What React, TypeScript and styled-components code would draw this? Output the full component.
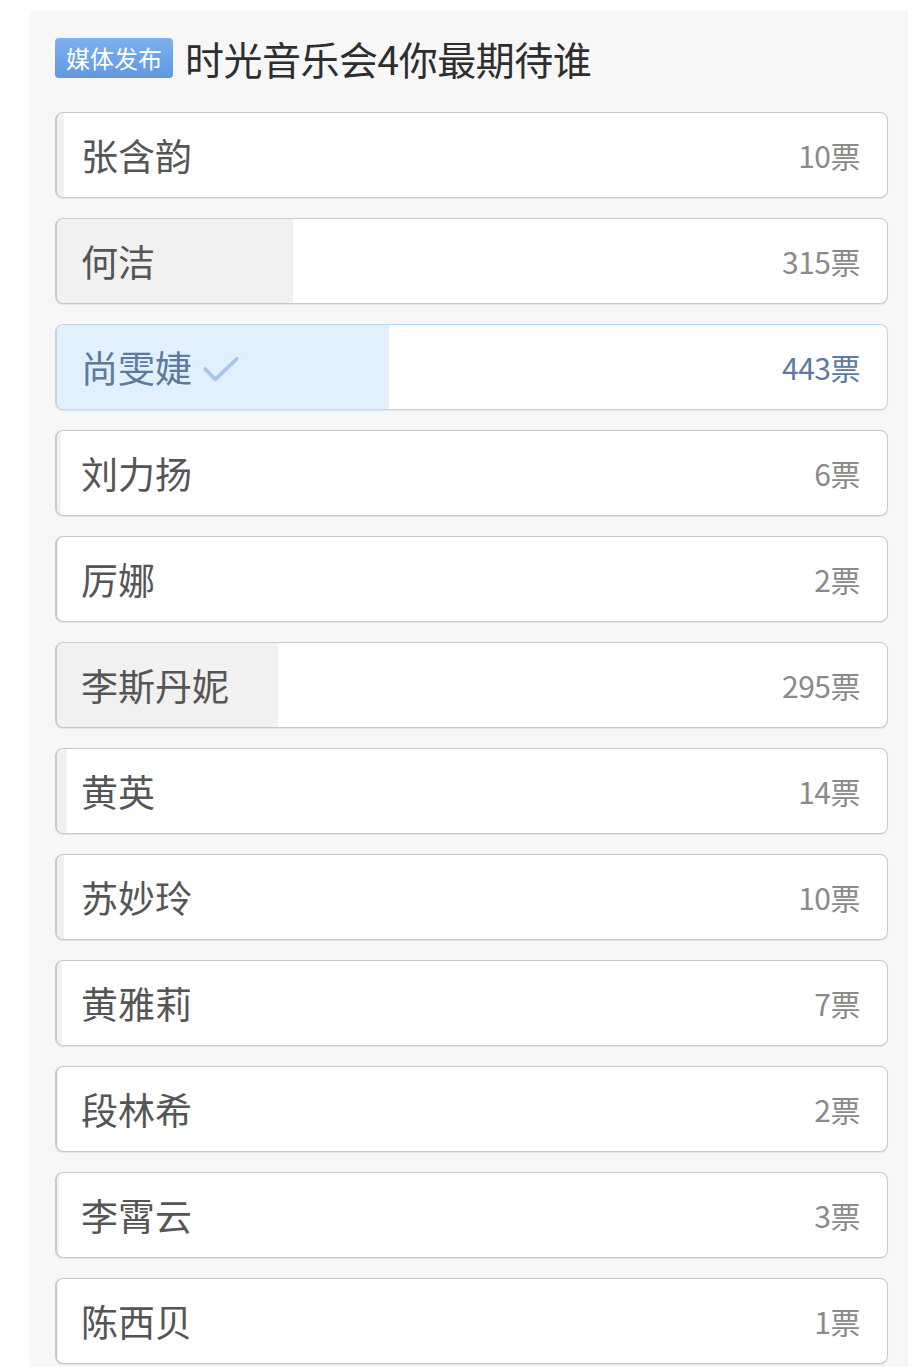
import styled, { createGlobalStyle } from "styled-components";

type Option = { name: string; votes: number; chosen?: boolean };

const options: Option[] = [
  { name: "张含韵", votes: 10 },
  { name: "何洁", votes: 315 },
  { name: "尚雯婕", votes: 443, chosen: true },
  { name: "刘力扬", votes: 6 },
  { name: "厉娜", votes: 2 },
  { name: "李斯丹妮", votes: 295 },
  { name: "黄英", votes: 14 },
  { name: "苏妙玲", votes: 10 },
  { name: "黄雅莉", votes: 7 },
  { name: "段林希", votes: 2 },
  { name: "李霄云", votes: 3 },
  { name: "陈西贝", votes: 1 },
];

const total = options.reduce((acc, o) => acc + o.votes, 0);

export default function App() {
  return (
    <>
      <GlobalStyle />
      <Page>
        <Panel>
          <Header>
            <Badge>媒体发布</Badge>
            <Title>时光音乐会4你最期待谁</Title>
          </Header>
          <List>
            {options.map((o) => (
              <Row key={o.name} $chosen={!!o.chosen}>
                <Fill
                  $chosen={!!o.chosen}
                  style={{ width: `${(o.votes / total) * 100}%` }}
                />
                <Name $chosen={!!o.chosen}>
                  {o.name}
                  {o.chosen && (
                    <Check viewBox="0 0 40 30">
                      <path
                        d="M3 14 L14 25 L37 3"
                        fill="none"
                        stroke="#a9c6e8"
                        strokeWidth="4"
                        strokeLinecap="round"
                        strokeLinejoin="round"
                      />
                    </Check>
                  )}
                </Name>
                <Votes $chosen={!!o.chosen}>{o.votes}票</Votes>
              </Row>
            ))}
          </List>
        </Panel>
      </Page>
    </>
  );
}

const GlobalStyle = createGlobalStyle`
  body {
    margin: 0;
    background: #ffffff;
    font-family: "Noto Sans CJK SC", "Noto Sans", sans-serif;
  }
`;

const Page = styled.div`
  padding: 10px 8px 0 30px;
  height: 1367px;
  box-sizing: border-box;
  overflow: hidden;
`;

const Panel = styled.div`
  background: #f7f7f7;
  padding: 26px 20px 40px 25px;
  height: 100%;
  box-sizing: border-box;
`;

const Header = styled.div`
  display: flex;
  align-items: center;
  gap: 12px;
  margin-bottom: 32px;
  height: 44px;
`;

const Badge = styled.span`
  background: linear-gradient(180deg, #7db1ef 0%, #5f97e2 100%);
  color: #ffffff;
  font-size: 24px;
  line-height: 40px;
  padding: 0 11px;
  border-radius: 4px;
`;

const Title = styled.span`
  font-size: 39px;
  color: #2e2e2e;
  letter-spacing: -0.5px;
`;

const List = styled.div`
  display: flex;
  flex-direction: column;
  gap: 20px;
`;

const Row = styled.div<{ $chosen: boolean }>`
  position: relative;
  height: 86px;
  box-sizing: border-box;
  display: flex;
  align-items: center;
  justify-content: space-between;
  padding: 0 27px 0 24px;
  background: #ffffff;
  border: 1px solid ${({ $chosen }) => ($chosen ? "#bcd6ea" : "#c9c9c9")};
  border-left-width: 2px;
  border-radius: 8px;
  box-shadow: 0 1px 1px rgba(0, 0, 0, 0.08);
  overflow: hidden;
`;

const Fill = styled.div<{ $chosen: boolean }>`
  position: absolute;
  left: 0;
  top: 0;
  bottom: 0;
  background: ${({ $chosen }) => ($chosen ? "#e2f0fd" : "#f1f1f1")};
`;

const Name = styled.span<{ $chosen: boolean }>`
  position: relative;
  display: flex;
  align-items: center;
  gap: 10px;
  font-size: 37px;
  color: ${({ $chosen }) => ($chosen ? "#5d7aa0" : "#555555")};
`;

const Check = styled.svg`
  width: 38px;
  height: 28px;
  margin-top: 6px;
`;

const Votes = styled.span<{ $chosen: boolean }>`
  position: relative;
  font-size: 30px;
  color: ${({ $chosen }) => ($chosen ? "#5d7aa0" : "#8a8a8a")};
  letter-spacing: -0.5px;
`;
